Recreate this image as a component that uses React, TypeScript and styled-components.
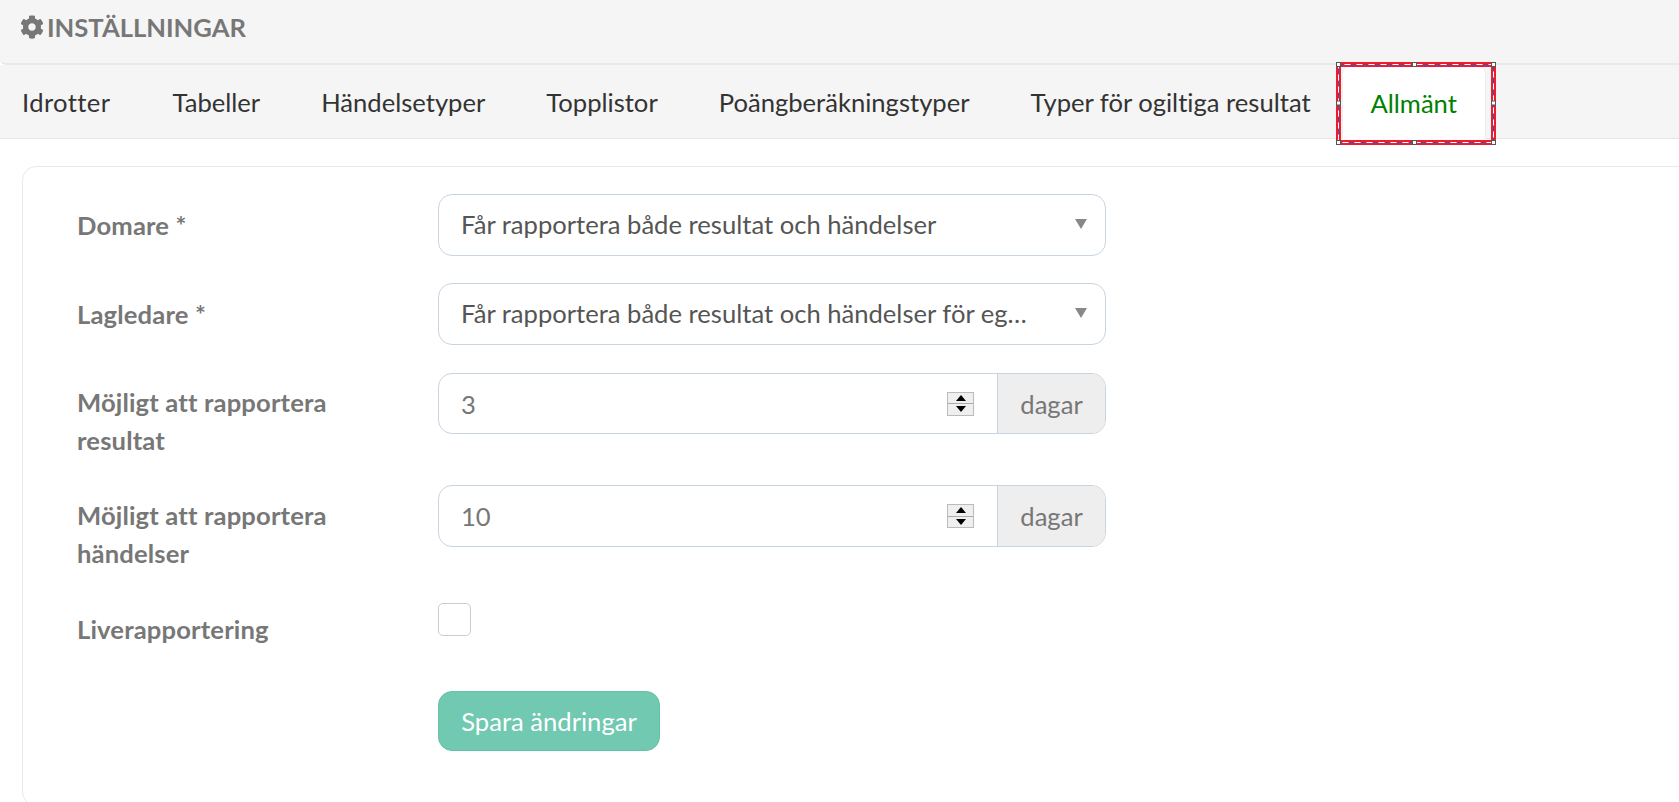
import React from "react";
import styled, { createGlobalStyle } from "styled-components";

const Global = createGlobalStyle`
  html, body { margin: 0; padding: 0; background: #fff; overflow: hidden; }
  body { font-family: Lato, "Open Sans", sans-serif; font-size: 25.6px; color: #333; font-variant-ligatures: none; }
  * { box-sizing: border-box; }
`;
const Page = styled.div`width: 1679px; height: 802px; overflow: hidden;`;
const Header = styled.header`
  height: 65px; background: #f5f5f5; border-bottom: 2px solid #e9e9e9; border-radius: 0 0 0 6px;
  display: flex; align-items: center; gap: 3px; padding: 0 20px 9px;
  color: #777; font-weight: 700; font-size: 25.6px;
`;
const TabBar = styled.nav`
  height: 74px; background: #f5f5f5; border-bottom: 1px solid #e7e7e7;
  display: flex; align-items: stretch; padding-left: 22px; position: relative;
`;
const Tab = styled.a`
  display: flex; align-items: center; font-size: 25.6px; white-space: nowrap; margin-right: 61px; color: #333;
  &:first-child { letter-spacing: 0.4px; margin-right: 62px; }
`;
const ActiveTab = styled.a`
  display: flex; align-items: center; justify-content: center; width: 144px; margin-left: -30px; height: 74px;
  background: #fff; color: #008000; font-size: 25.6px; border: 1px solid #eee; border-bottom: none;
  border-radius: 9px 9px 0 0;
`;
const SelectionFrame = styled.svg`
  position: absolute; left: 1336px; top: -3px; width: 160px; height: 83px; overflow: visible;
`;
const Card = styled.section`
  margin: 27px 0 0 22px; width: 1700px; height: 640px; border: 1px solid #e9e9e9; border-radius: 14px;
  padding: 27px 0 0 54px;
`;
const Row = styled.div<{ $h: number }>`
  display: flex; height: ${(p) => p.$h}px;
`;
const Label = styled.label<{ $up?: number }>`
  width: 361px; padding: 12px 30px 0 0; font-weight: 700; color: #777; font-size: 25.6px; line-height: 37.5px;
  letter-spacing: 0.15px;
  margin-top: ${(p) => p.$up ?? 0}px;
`;
const Select = styled.div`
  width: 668px; height: 62px; border: 1px solid #c8d4e0; border-radius: 14px; background: #fff;
  display: flex; align-items: center; padding: 0 18px 0 22px; color: #555; font-size: 25.6px; justify-content: space-between;
`;
const SelectText = styled.span`white-space: nowrap; margin-top: -2px;`;
const Caret = styled.span`
  width: 0; height: 0; border-left: 6px solid transparent; border-right: 6px solid transparent;
  border-top: 10px solid #888; margin-top: -3px;
`;
const Group = styled.div<{ $h: number }>`
  width: 668px; height: ${(p) => p.$h}px; border: 1px solid #c8d4e0; border-radius: 14px; display: flex; overflow: hidden;
`;
const NumberCell = styled.div`
  flex: 1; display: flex; align-items: center; justify-content: space-between; padding: 0 23px 0 22px; color: #777; font-size: 25.6px;
`;
const Spinner = styled.div`
  width: 27px; height: 24px; display: flex; flex-direction: column; background: #efefef; border: 1px solid #bbb;
`;
const SpinPart = styled.span<{ $up?: boolean }>`
  flex: 1; display: flex; align-items: center; justify-content: center;
  border-top: ${(p) => (p.$up ? "none" : "1px solid #aaa")};
  &::after {
    content: ""; width: 0; height: 0; border-left: 5px solid transparent; border-right: 5px solid transparent;
    ${(p) => (p.$up ? "border-bottom: 6px solid #000;" : "border-top: 6px solid #000;")}
  }
`;
const Addon = styled.div`
  width: 108px; background: #eee; border-left: 1px solid #c8d4e0; display: flex; align-items: center; justify-content: center;
  color: #777; font-size: 25.6px;
`;
const Check = styled.div`
  width: 33px; height: 33px; border: 1px solid #ccc; border-radius: 5px; background: #fff;
`;
const Save = styled.button`
  margin-left: 361px; width: 222px; height: 60px; border: 1px solid #66c2a5; border-radius: 14px; background: #70c9b0;
  color: #fff; font: 400 25.6px Lato, sans-serif; padding: 0;
`;
const Gear = () => (
  <svg width="24" height="24" viewBox="0 0 512 512" fill="#777">
    <path d="M487.4 315.7l-42.6-24.6c4.3-23.2 4.3-47 0-70.2l42.6-24.6c4.9-2.8 7.1-8.6 5.5-14-11.1-35.6-30-67.8-54.7-94.6-3.8-4.1-10-5.1-14.8-2.3L380.8 110c-17.9-15.4-38.5-27.3-60.8-35.1V25.8c0-5.6-3.9-10.5-9.4-11.7-36.7-8.2-74.3-7.8-109.2 0-5.5 1.2-9.4 6.1-9.4 11.7V75c-22.2 7.9-42.8 19.8-60.8 35.1L88.7 85.5c-4.9-2.8-11-1.9-14.8 2.3-24.7 26.7-43.6 58.9-54.7 94.6-1.7 5.4.6 11.2 5.5 14L67.3 221c-4.3 23.2-4.3 47 0 70.2l-42.6 24.6c-4.9 2.8-7.1 8.6-5.5 14 11.1 35.6 30 67.8 54.7 94.6 3.8 4.1 10 5.1 14.8 2.3l42.6-24.6c17.9 15.4 38.5 27.3 60.8 35.1v49.2c0 5.6 3.9 10.5 9.4 11.7 36.7 8.2 74.3 7.8 109.2 0 5.5-1.2 9.4-6.1 9.4-11.7v-49.2c22.2-7.9 42.8-19.8 60.8-35.1l42.6 24.6c4.9 2.8 11 1.9 14.8-2.3 24.7-26.7 43.6-58.9 54.7-94.6 1.5-5.5-.7-11.3-5.6-14.1zM256 336c-44.1 0-80-35.9-80-80s35.9-80 80-80 80 35.9 80 80-35.9 80-80 80z" />
  </svg>
);
const handles: [number, number][] = [
  [2.5, 2.5], [78.5, 2.5], [157.5, 2.5], [2.5, 41], [157.5, 41], [2.5, 80.5], [78.5, 80.5], [157.5, 80.5],
];
const Frame = () => (
  <SelectionFrame viewBox="0 0 160 83" fill="none">
    <rect x="2.5" y="2.5" width="155" height="78" stroke="#ed1c2e" strokeWidth="5" />
    <rect x="2.5" y="2.5" width="155" height="78" stroke="#fff" strokeWidth="1" />
    <rect x="2.5" y="2.5" width="155" height="78" stroke="#2a5db8" strokeWidth="1" strokeDasharray="6 6" />
    {handles.map(([x, y]) => (
      <rect key={`${x}-${y}`} x={x - 2} y={y - 2} width="4" height="4" fill="#fff" stroke="#555" strokeWidth="1" />
    ))}
  </SelectionFrame>
);
const NumberField = ({ value, h }: { value: string; h: number }) => (
  <Group $h={h}>
    <NumberCell>
      {value}
      <Spinner><SpinPart $up /><SpinPart /></Spinner>
    </NumberCell>
    <Addon>dagar</Addon>
  </Group>
);
export default function App() {
  return (
    <Page>
      <Global />
      <Header><Gear />INSTÄLLNINGAR</Header>
      <TabBar>
        <Tab>Idrotter</Tab>
        <Tab>Tabeller</Tab>
        <Tab>Händelsetyper</Tab>
        <Tab>Topplistor</Tab>
        <Tab>Poängberäkningstyper</Tab>
        <Tab>Typer för ogiltiga resultat</Tab>
        <ActiveTab>Allmänt</ActiveTab>
        <Frame />
      </TabBar>
      <Card>
        <Row $h={89}><Label $up={1}>Domare *</Label><Select><SelectText>Får rapportera både resultat och händelser</SelectText><Caret /></Select></Row>
        <Row $h={90}><Label $up={1}>Lagledare *</Label><Select><SelectText>Får rapportera både resultat och händelser för eg…</SelectText><Caret /></Select></Row>
        <Row $h={112}><Label $up={-1}>Möjligt att rapportera resultat</Label><NumberField value="3" h={61} /></Row>
        <Row $h={118}><Label>Möjligt att rapportera händelser</Label><NumberField value="10" h={62} /></Row>
        <Row $h={88}><Label $up={-4}>Liverapportering</Label><Check /></Row>
        <Save>Spara ändringar</Save>
      </Card>
    </Page>
  );
}
